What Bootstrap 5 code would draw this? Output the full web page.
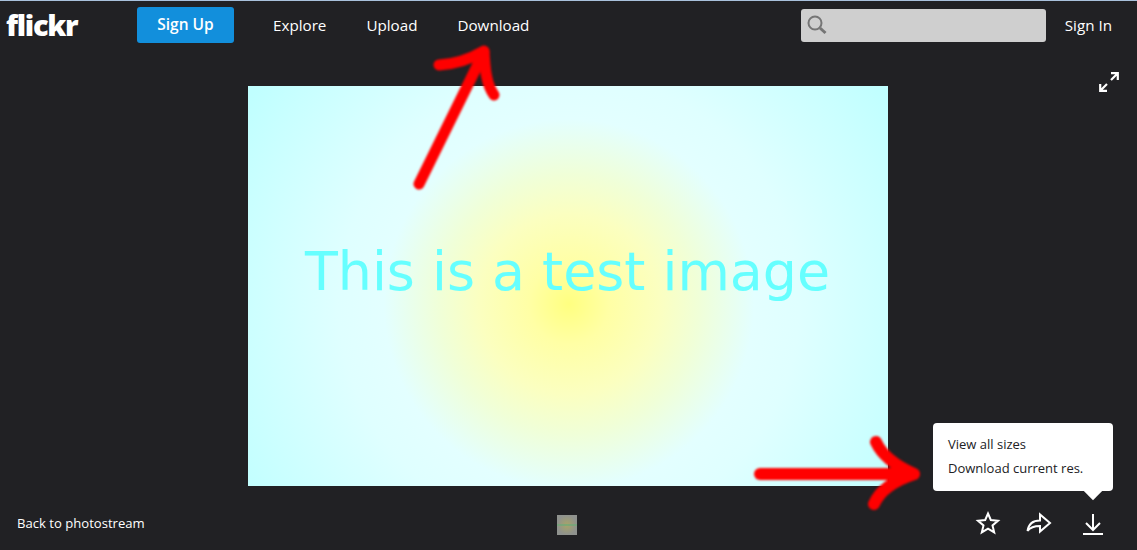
<!DOCTYPE html>
<html lang="en">
<head>
    <meta charset="UTF-8">
    <title>flickr</title>
    <link href="https://cdn.jsdelivr.net/npm/bootstrap@5.3.0/dist/css/bootstrap.min.css" rel="stylesheet">
    <style>
        html, body { height: 100%; }
        body {
            background: #212124;
            font-family: "Open Sans", "Liberation Sans", sans-serif;
            overflow: hidden;
        }
        .viewer-page {
            position: relative;
            height: 550px;
            border-top: 1px solid #a9c1dc;
        }
        .top-bar { height: 48px; padding: 0 25px 0 7px; }
        .brand-word {
            width: 130px;
            color: #fff;
            font: 800 29px/1 "Open Sans", sans-serif;
            letter-spacing: -1.300px;
            margin-top: -1px;
            margin-left: -1px;
            margin-right: 1px;
        }
        .signup-btn {
            width: 97px;
            height: 36px;
            padding: 0;
            background: #128fdc;
            border: 0;
            border-radius: 3px;
            font-size: 15.500px;
            font-weight: 600;
            line-height: 34px;
        }
        .main-links { margin-left: 39px; gap: 40px; }
        .main-links a, .signin-link {
            color: #fff;
            font-size: 15.200px;
            text-decoration: none;
        }
        .back-link {
            color: #fff;
            text-decoration: none;
            font-size: 13.100px;
            margin-top: 17px;
        }
        .search-box {
            width: 245px;
            height: 33px;
            background: #cfcfcf;
            border-radius: 3px;
            padding-left: 6px;
            margin-right: 19px;
        }
        .stage {
            position: relative;
            height: 437px;
            padding-top: 37px;
        }
        .test-image {
            width: 640px;
            height: 400px;
            margin-left: -2px;
            padding-top: 154px;
            background: radial-gradient(circle at 321px 218px, #ffff80 0, #ffffa5 40px, #fbffc0 90px, #f0ffd8 130px, #e3ffff 185px, #dfffff 230px, #c0ffff 380px);
            color: #66ffff;
            font: 400 53.800px/1.2 "DejaVu Sans", sans-serif;
            text-align: center;
        }
        .expand-btn { position: absolute; top: 23px; right: 18px; line-height: 0; }
        .bottom-bar {
            height: 64px;
            padding: 11px 33px 0 17px;
            display: grid;
            grid-template-columns: 1fr 20px 1fr;
        }
        .photo-thumb {
            width: 20px;
            height: 20px;
            margin-top: 18px;
            margin-left: 6px;
            background:
                linear-gradient(transparent 45%, rgba(110, 170, 120, .7) 45%, rgba(110, 170, 120, .7) 55%, transparent 55%),
                radial-gradient(circle, #a8a468 0, #8f928e 70%);
        }
        .action-icons { gap: 25px; margin-top: 13px; }
        .action-icons svg:nth-child(2) { margin-top: 1px; }
        .action-icons svg:last-child { margin-left: 5px; margin-top: 2px; }
        .sizes-menu {
            position: absolute;
            left: 933px;
            top: 422px;
            width: 180px;
            height: 68px;
            padding: 9px 15px;
            background: #fff;
            border-radius: 4px;
            font-size: 13px;
            line-height: 24px;
        }
        .sizes-menu a { display: block; color: #212124; text-decoration: none; }
        .sizes-menu::after {
            content: "";
            position: absolute;
            left: 151px;
            bottom: -9px;
            width: 18px;
            height: 18px;
            background: #fff;
            transform: rotate(45deg) scale(.72);
        }
        .red-arrows {
            position: absolute;
            left: 0;
            top: -1px;
            width: 1137px;
            height: 550px;
            pointer-events: none;
            filter: blur(1px);
        }
    </style>
</head>
<body>
    <div class="viewer-page">
        <nav class="top-bar d-flex align-items-center">
            <a class="brand-word text-decoration-none" href="#">flickr</a>
            <a class="btn btn-primary signup-btn" href="#">Sign Up</a>
            <div class="main-links d-flex">
                <a href="#">Explore</a>
                <a href="#">Upload</a>
                <a href="#">Download</a>
            </div>
            <div class="search-box d-flex align-items-center ms-auto">
                <svg width="22" height="24" viewBox="0 0 22 24" fill="none" stroke="#757575">
                    <circle cx="8" cy="10" r="6.500" stroke-width="2"/>
                    <path d="M13 15l5.500 5" stroke-width="3"/>
                </svg>
            </div>
            <a class="signin-link" href="#">Sign In</a>
        </nav>

        <div class="stage d-flex justify-content-center">
            <div class="test-image">This is a test image</div>
            <a class="expand-btn" href="#">
                <svg width="20" height="20" viewBox="0 0 20 20" fill="none" stroke="#fff" stroke-width="2.200">
                    <path d="M12 1.200h6.800V8M18.500 1.500l-6.500 6.500M8 18.800H1.200V12M1.500 18.500L8 12"/>
                </svg>
            </a>
        </div>

        <div class="bottom-bar">
            <a class="back-link" href="#">Back to photostream</a>
            <div class="photo-thumb"></div>
            <div class="action-icons d-flex justify-content-end align-items-start">
                <svg width="26" height="25" viewBox="0 0 26 25" fill="none" stroke="#fff" stroke-width="2">
                    <path d="M13 3.500l2.800 6.500 7.200.7-5.500 4.700 1.700 7L13 18.700l-6.200 3.700 1.700-7L3 10.700l7.200-.7z"/>
                </svg>
                <svg width="26" height="24" viewBox="0 0 26 24" fill="none" stroke="#fff" stroke-width="2">
                    <path d="M1.500 20C2.500 13 7.500 9.500 14 9.500V3.500L24 12l-10 8.500V15c-5 0-9.500 1-12.500 5z"/>
                </svg>
                <svg width="22" height="24" viewBox="0 0 22 24" fill="none" stroke="#fff" stroke-width="2">
                    <path d="M11 2v16M4 11l7 7 7-7M1 22h20"/>
                </svg>
            </div>
        </div>

        <div class="sizes-menu">
            <a href="#">View all sizes</a>
            <a href="#">Download current res.</a>
        </div>

        <svg class="red-arrows" viewBox="0 0 1137 550" fill="none" stroke="#ff0000" stroke-linecap="round" stroke-linejoin="round">
            <path stroke-width="11" d="M419 184L484 52"/>
            <path stroke-width="11" d="M439 65C458 64 472 58 484 51C485 68 486 84 494 95"/>
            <path stroke-width="12" d="M760 474H912"/>
            <path stroke-width="12" d="M876 442C882 455 896 466 914 474C896 480 880 490 874 504"/>
        </svg>
    </div>
</body>
</html>
